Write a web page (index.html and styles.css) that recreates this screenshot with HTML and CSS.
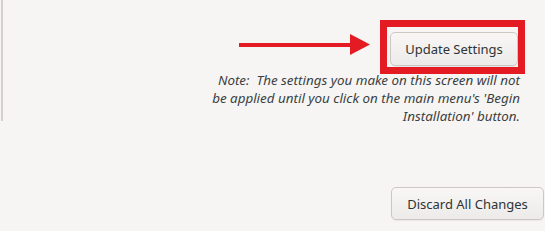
FILE: index.html
```html
<!DOCTYPE html>
<html>
<head>
<link rel="stylesheet" href="styles.css">
</head>
<body>
<div class="page">
  <div class="edge"></div>
  <div class="main">
    <div class="action-row">
      <svg class="arrow" width="131" height="22" viewBox="0 0 131 22">
        <rect x="0" y="9" width="115" height="4" fill="#e41b22"/>
        <polygon points="111,0 131,10.5 111,21" fill="#e41b22"/>
      </svg>
      <div class="highlight">
        <button class="btn btn-update">Update Settings</button>
      </div>
    </div>
    <p class="note">Note:&nbsp; The settings you make on this screen will not<br>be applied until you click on the main menu's 'Begin<br>Installation' button.</p>
    <button class="btn btn-discard">Discard All Changes</button>
  </div>
</div>
</body>
</html>
```

FILE: styles.css
```css
* {
  box-sizing: border-box;
}

body {
  margin: 0;
  background-color: #f6f5f4;
  font-family: "Noto Sans", sans-serif;
  color: #2e3436;
}

.page {
  display: flex;
  height: 231px;
}

.edge {
  flex: none;
  width: 2px;
  height: 121px;
  margin-left: 1px;
  background-color: #d3d0cb;
}

.main {
  flex: 1;
  display: flex;
  flex-direction: column;
  align-items: flex-end;
}

.action-row {
  display: flex;
  align-items: center;
  margin-top: 20px;
  margin-right: 20px;
}

.arrow {
  display: block;
  margin-right: 10px;
  margin-top: -4px;
}

.highlight {
  border: 7px solid #e41b22;
  padding: 5px 0 1px 3px;
}

.btn {
  display: block;
  font-family: inherit;
  font-size: 13px;
  color: #2e3436;
  background: linear-gradient(#f8f7f6, #edebe9);
  border: 1px solid #cdc7c2;
  border-radius: 5px;
  box-shadow: 0 1px 1px rgba(0, 0, 0, 0.06);
}

.btn-update {
  width: 128px;
  height: 34px;
}

.note {
  margin: -3px 25px 0 0;
  font-size: 13.4px;
  font-style: italic;
  line-height: 18px;
  text-align: right;
  color: #3b3f41;
}

.btn-discard {
  width: 153px;
  height: 33px;
  margin-top: auto;
  margin-bottom: 11px;
  margin-right: 1px;
}
```
